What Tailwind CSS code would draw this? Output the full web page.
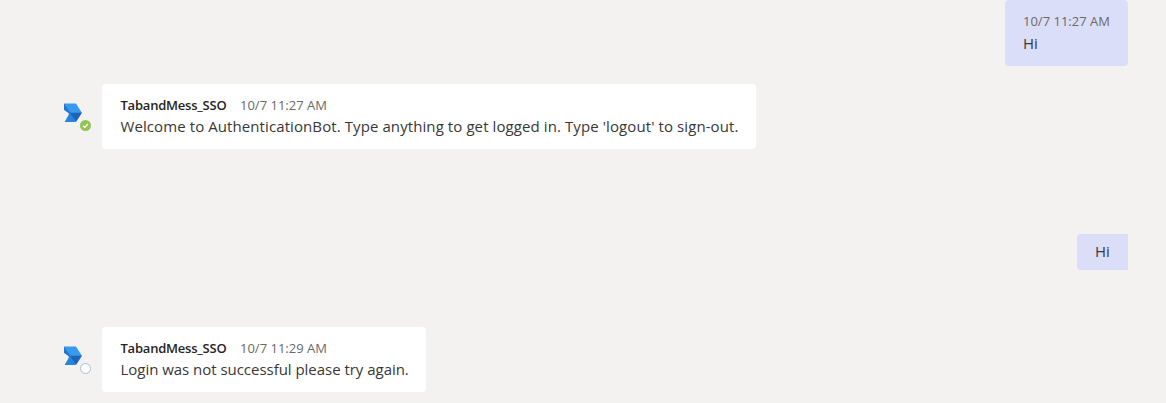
<!DOCTYPE html>
<html lang="en"><head><meta charset="utf-8"><title>Chat</title>
<script src="https://cdn.jsdelivr.net/npm/@tailwindcss/browser@4"></script></head>
<body class="bg-[#f3f2f1] font-['Open_Sans','Noto_Sans',sans-serif] text-[#383735] w-[1166px] h-[403px] overflow-hidden">
<main class="flex flex-col pl-[63px] pr-[38px]">
  <section class="self-end w-[123px] h-[66px] rounded-[4px] bg-[#dbdef9] pl-[18px] pt-[11px] whitespace-nowrap">
    <div class="h-[20px] leading-[20px] text-[13px] text-[#6b6967]">10/7 11:27 AM</div>
    <p class="leading-[24px] text-[15px]">Hi</p>
  </section>

  <section class="mt-[18px] flex">
    <svg class="w-[39px] h-[65px] shrink-0" viewBox="0 0 39 65">
      <path d="M1 19.5H13L19 29H5.6L1 25.8Z" fill="#3999ee"/>
      <path d="M1 19.5L7.5 29H5.6L1 25.8Z" fill="#2377cd"/>
      <path d="M5.6 28.8H19L13 38Z" fill="#1a65b9"/>
      <path d="M5.8 28.8H7L13 38H1.6L5.6 31Z" fill="#2684da"/>
      <circle cx="22.5" cy="41.5" r="5.5" fill="#92c353"/>
      <path d="M20 41.7L21.8 43.4L25 40" fill="none" stroke="#fff" stroke-width="1.2"/>
    </svg>
    <div class="w-[654px] h-[65px] rounded-[4px] bg-white pl-[18.5px] pt-[11px] whitespace-nowrap">
      <div class="flex h-[20px] leading-[20px] text-[13px]"><span class="w-[119.5px] font-semibold tracking-[-0.22px] text-[#252423]">TabandMess_SSO</span><span class="text-[#6b6967]">10/7 11:27 AM</span></div>
      <p class="leading-[23px] text-[15px] tracking-[0.09px]">Welcome to AuthenticationBot. Type anything to get logged in. Type 'logout' to sign-out.</p>
    </div>
  </section>

  <section class="mt-[85px] self-end w-[51px] h-[36px] rounded-l-[4px] bg-[#dbdef9] pl-[18px] leading-[34px] text-[15px]">Hi</section>

  <section class="mt-[57px] flex">
    <svg class="w-[39px] h-[65px] shrink-0" viewBox="0 0 39 65">
      <path d="M1 19.5H13L19 29H5.6L1 25.8Z" fill="#3999ee"/>
      <path d="M1 19.5L7.5 29H5.6L1 25.8Z" fill="#2377cd"/>
      <path d="M5.6 28.8H19L13 38Z" fill="#1a65b9"/>
      <path d="M5.8 28.8H7L13 38H1.6L5.6 31Z" fill="#2684da"/>
      <circle cx="22.5" cy="41.5" r="5" fill="#fff" stroke="#a9bfd3"/>
    </svg>
    <div class="w-[324px] h-[65px] rounded-[4px] bg-white pl-[18.5px] pt-[11px] whitespace-nowrap">
      <div class="flex h-[20px] leading-[20px] text-[13px]"><span class="w-[119.5px] font-semibold tracking-[-0.22px] text-[#252423]">TabandMess_SSO</span><span class="text-[#6b6967]">10/7 11:29 AM</span></div>
      <p class="leading-[23px] text-[15px] tracking-[-0.03px]">Login was not successful please try again.</p>
    </div>
  </section>
</main>
</body></html>
